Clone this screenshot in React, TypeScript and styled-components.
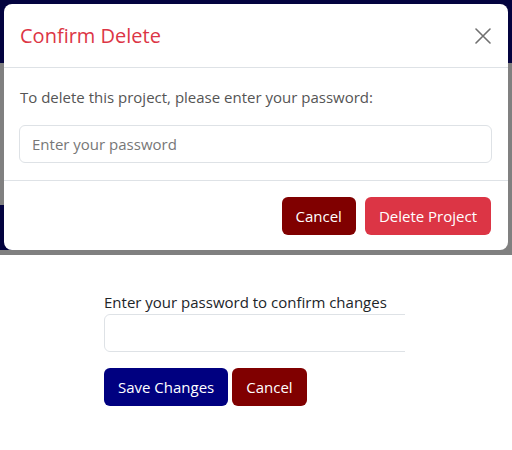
import React from "react";
import styled, { createGlobalStyle } from "styled-components";

const Global = createGlobalStyle`
  html, body { margin: 0; padding: 0; background: #fff; }
  body { font-family: "Open Sans", "Noto Sans", sans-serif; }
  * { box-sizing: border-box; }
`;

const Stage = styled.div`
  position: relative;
  height: 255px;
  display: flex;
  flex-direction: column;
  background: #808080;
  overflow: hidden;
`;

const NavBar = styled.div`
  height: 63px;
  background: #03033f;
`;

const BackContent = styled.div`
  flex: 1;
  display: flex;
  flex-direction: column;
  justify-content: flex-end;
  padding-bottom: 5px;
`;

const BackBlock = styled.div`
  height: 45px;
  width: 40px;
  background: #03033f;
`;

const Overlay = styled.div`
  position: absolute;
  inset: 0;
  padding: 4px 4px 0 4px;
`;

const Modal = styled.div`
  background: #fff;
  border-radius: 8px;
  height: 246px;
  display: flex;
  flex-direction: column;
`;

const Header = styled.div`
  height: 64px;
  display: flex;
  align-items: center;
  justify-content: space-between;
  padding: 0 17px 0 16px;
  border-bottom: 1px solid #dee2e6;
`;

const Title = styled.h5`
  margin: 0;
  font-size: 20px;
  font-weight: 400;
  color: #dc3545;
`;

const Close = styled.button`
  border: 0;
  background: transparent;
  padding: 0;
  width: 16px;
  height: 16px;
  display: flex;
  align-items: center;
  justify-content: center;
  color: #707070;
`;

const Body = styled.div`
  padding: 19px 16px 17px 15px;
  border-bottom: 1px solid #dee2e6;
  display: flex;
  flex-direction: column;
  gap: 18px;
`;

const Text = styled.p`
  margin: 0;
  font-size: 15px;
  line-height: 20px;
  color: #555;
  padding-left: 1px;
`;

const Input = styled.input<{ $w?: string }>`
  height: 38px;
  width: ${(p) => p.$w ?? "100%"};
  border: 1px solid #dee2e6;
  border-radius: 6px;
  padding: 0 12px;
  font-family: inherit;
  font-size: 15px;
  color: #212529;
  &::placeholder { color: #777; }
`;

const Footer = styled.div`
  flex: 1;
  display: flex;
  align-items: center;
  justify-content: flex-end;
  gap: 9px;
  padding: 0 17px 0 16px;
`;

const Btn = styled.button<{ $bg: string }>`
  height: 38px;
  padding: 0 14px;
  border: 0;
  border-radius: 6px;
  background: ${(p) => p.$bg};
  color: #fff;
  font-family: inherit;
  font-size: 15px;
`;

const Form = styled.div`
  padding: 37px 0 0 104px;
  display: flex;
  flex-direction: column;
`;

const Label = styled.label`
  font-size: 15px;
  color: #212529;
  line-height: 20px;
`;

const Clip = styled.div`
  width: 301px;
  overflow: hidden;
  margin-top: 2px;
`;

const Row = styled.div`
  display: flex;
  gap: 4px;
  margin-top: 16px;
`;

export default function App() {
  return (
    <>
      <Global />
      <Stage>
        <NavBar />
        <BackContent>
          <BackBlock />
        </BackContent>
        <Overlay>
          <Modal>
            <Header>
              <Title>Confirm Delete</Title>
              <Close aria-label="Close">
                <svg width="16" height="16" viewBox="0 0 16 16" fill="none" stroke="currentColor" strokeWidth="1.6" strokeLinecap="round">
                  <path d="M1 1 L15 15 M15 1 L1 15" />
                </svg>
              </Close>
            </Header>
            <Body>
              <Text>To delete this project, please enter your password:</Text>
              <Input type="password" placeholder="Enter your password" />
            </Body>
            <Footer>
              <Btn $bg="#800000">Cancel</Btn>
              <Btn $bg="#dc3545">Delete Project</Btn>
            </Footer>
          </Modal>
        </Overlay>
      </Stage>
      <Form>
        <Label>Enter your password to confirm changes</Label>
        <Clip>
          <Input type="password" $w="320px" />
        </Clip>
        <Row>
          <Btn $bg="#000080">Save Changes</Btn>
          <Btn $bg="#800000">Cancel</Btn>
        </Row>
      </Form>
    </>
  );
}
